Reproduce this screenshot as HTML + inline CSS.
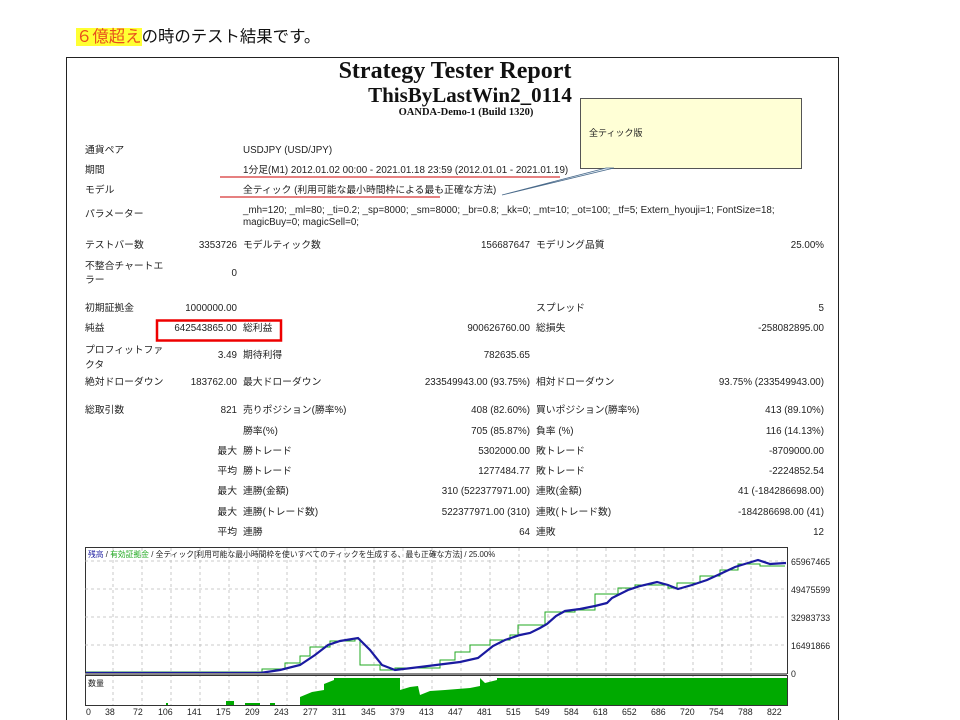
<!DOCTYPE html>
<html style="height:720px;overflow:hidden"><head><meta charset="utf-8"><style>
html,body{margin:0;width:960px;height:720px;overflow:hidden}
body{background:#fff;position:relative;font-family:"Liberation Sans","Noto Sans CJK JP",sans-serif;}
.a{position:absolute;white-space:nowrap;font-size:9.8px;color:#222;line-height:12px}
.r{text-align:right}
.t{position:absolute;left:66px;width:800px;text-align:center;font-family:"Liberation Serif",serif;font-weight:bold;color:#111;white-space:nowrap}
</style></head><body>
<div class="a" style="left:76px;top:26px;font-size:16.4px;line-height:22px;color:#111"><span style="background:#ffff33;color:#e8501c">６億超え</span>の時のテスト結果です。</div>
<div style="position:absolute;left:66px;top:57px;width:773px;height:663px;border:1px solid #222;border-bottom:none;box-sizing:border-box"></div>
<div class="t" style="top:57px;font-size:24px;line-height:28px;left:55px">Strategy Tester Report</div>
<div class="t" style="top:83px;font-size:21px;line-height:24px;left:70px">ThisByLastWin2_0114</div>
<div class="t" style="top:106px;font-size:10.5px;line-height:14px">OANDA-Demo-1 (Build 1320)</div>

<svg style="position:absolute;left:0;top:0" width="960" height="720">
<rect x="580.5" y="98.5" width="221" height="70" fill="#ffffd6" stroke="#555"/>
<polygon points="502,195 606,168 614,168" fill="#e8f2fa" stroke="#4a6a8a" stroke-width="0.8"/>
<line x1="220" y1="177" x2="560" y2="177" stroke="#c00" stroke-width="1"/>
<line x1="220" y1="197" x2="440" y2="197" stroke="#c00" stroke-width="1"/>
<rect x="157" y="320.5" width="124" height="20" fill="none" stroke="#e00" stroke-width="2.5"/>
<rect x="85.5" y="547.5" width="702" height="126" fill="#fff" stroke="#333"/>
<g stroke="#bbb" stroke-dasharray="3,3" stroke-width="0.8">
<line x1="85" y1="589" x2="787" y2="589"/><line x1="85" y1="617" x2="787" y2="617"/><line x1="85" y1="645" x2="787" y2="645"/><line x1="85" y1="561" x2="787" y2="561"/>
<line x1="113" y1="548" x2="113" y2="705"/><line x1="142" y1="548" x2="142" y2="705"/><line x1="171" y1="548" x2="171" y2="705"/><line x1="200" y1="548" x2="200" y2="705"/><line x1="229" y1="548" x2="229" y2="705"/><line x1="258" y1="548" x2="258" y2="705"/><line x1="287" y1="548" x2="287" y2="705"/><line x1="316" y1="548" x2="316" y2="705"/><line x1="345" y1="548" x2="345" y2="705"/><line x1="374" y1="548" x2="374" y2="705"/><line x1="403" y1="548" x2="403" y2="705"/><line x1="432" y1="548" x2="432" y2="705"/><line x1="461" y1="548" x2="461" y2="705"/><line x1="490" y1="548" x2="490" y2="705"/><line x1="519" y1="548" x2="519" y2="705"/><line x1="548" y1="548" x2="548" y2="705"/><line x1="577" y1="548" x2="577" y2="705"/><line x1="606" y1="548" x2="606" y2="705"/><line x1="635" y1="548" x2="635" y2="705"/><line x1="664" y1="548" x2="664" y2="705"/><line x1="693" y1="548" x2="693" y2="705"/><line x1="722" y1="548" x2="722" y2="705"/><line x1="751" y1="548" x2="751" y2="705"/>
</g>
<polyline fill="none" stroke="#22aa22" stroke-width="1" points="86,672 262,672 262,669 285,669 285,663 300,663 300,656 310,656 310,647 330,647 330,641 355,641 355,639 360,639 360,665 380,665 380,670 395,670 395,668 440,668 440,660 455,660 455,652 470,652 470,645 490,645 490,640 510,640 510,635 518,635 518,625 545,625 545,612 575,612 575,610 595,610 595,594 618,594 618,588 635,588 635,585 668,585 668,588 677,588 677,583 700,583 700,576 720,576 720,570 738,570 738,564 760,564 760,566 785,566"/>
<polyline fill="none" stroke="#1a1aa0" stroke-width="2.2" points="86,673 260,673 280,670 300,665 315,655 328,645 340,641 358,638 370,650 382,665 395,670 420,667 460,662 478,658 493,646 505,640 520,635 530,633 540,628 547,624 556,616 565,611 580,609 595,606 607,603 612,598 622,593 628,590 640,586 657,582 668,585 678,589 692,585 707,580 720,574 735,567 748,563 758,560 770,564 786,563"/>
<rect x="85.5" y="675.5" width="702" height="30" fill="none" stroke="#333"/>
<polygon fill="#00aa00" points="166,705 166,703 168,703 168,705 226,705 226,701 234,701 234,705 245,705 245,703 260,703 260,705 270,705 270,703 275,703 275,705 300,705 300,697 312,692 318,691 324,690 324,684 334,680 334,678 400,678 400,690 410,687 418,686 420,695 430,691 445,690 470,688 480,686 480,678 485,683 497,680 497,678 787,678 787,705"/>
<line x1="85" y1="674" x2="787" y2="674" stroke="#888" stroke-width="2"/>
</svg>
<div class="a" style="left:88px;top:550px;font-size:7.8px;line-height:10px"><span style="color:#1a1aa0">残高</span> / <span style="color:#22aa22">有効証拠金</span> / 全ティック[利用可能な最小時間枠を使いすべてのティックを生成する、最も正確な方法] / 25.00%</div>
<div class="a" style="left:88px;top:678px;font-size:8px">数量</div>
<div class="a" style="left:791px;top:556px;font-size:8.8px">65967465</div>
<div class="a" style="left:791px;top:584px;font-size:8.8px">49475599</div>
<div class="a" style="left:791px;top:612px;font-size:8.8px">32983733</div>
<div class="a" style="left:791px;top:640px;font-size:8.8px">16491866</div>
<div class="a" style="left:791px;top:668px;font-size:8.8px">0</div>
<div class="a" style="left:86px;top:706px;font-size:8.8px;height:12px;width:720px">
<span style="position:absolute;left:0">0</span><span style="position:absolute;left:19px">38</span><span style="position:absolute;left:47px">72</span><span style="position:absolute;left:72px">106</span><span style="position:absolute;left:101px">141</span><span style="position:absolute;left:130px">175</span><span style="position:absolute;left:159px">209</span><span style="position:absolute;left:188px">243</span><span style="position:absolute;left:217px">277</span><span style="position:absolute;left:246px">311</span><span style="position:absolute;left:275px">345</span><span style="position:absolute;left:304px">379</span><span style="position:absolute;left:333px">413</span><span style="position:absolute;left:362px">447</span><span style="position:absolute;left:391px">481</span><span style="position:absolute;left:420px">515</span><span style="position:absolute;left:449px">549</span><span style="position:absolute;left:478px">584</span><span style="position:absolute;left:507px">618</span><span style="position:absolute;left:536px">652</span><span style="position:absolute;left:565px">686</span><span style="position:absolute;left:594px">720</span><span style="position:absolute;left:623px">754</span><span style="position:absolute;left:652px">788</span><span style="position:absolute;left:681px">822</span></div>

<div class="a" style="left:589px;top:127px;font-size:9px">全ティック版</div>

<div class="a" style="left:85px;top:145px">通貨ペア</div><div class="a" style="left:243px;top:145px">USDJPY (USD/JPY)</div>
<div class="a" style="left:85px;top:165px">期間</div><div class="a" style="left:243px;top:165px">1分足(M1) 2012.01.02 00:00 - 2021.01.18 23:59 (2012.01.01 - 2021.01.19)</div>
<div class="a" style="left:85px;top:185px">モデル</div><div class="a" style="left:243px;top:185px">全ティック (利用可能な最小時間枠による最も正確な方法)</div>
<div class="a" style="left:85px;top:209px">パラメーター</div><div class="a" style="left:243px;top:205px">_mh=120; _ml=80; _ti=0.2; _sp=8000; _sm=8000; _br=0.8; _kk=0; _mt=10; _ot=100; _tf=5; Extern_hyouji=1; FontSize=18;<br>magicBuy=0; magicSell=0;</div>

<div class="a" style="left:85px;top:240px">テストバー数</div><div class="a r" style="right:723px;top:240px">3353726</div><div class="a" style="left:243px;top:240px">モデルティック数</div><div class="a r" style="right:430px;top:240px">156687647</div><div class="a" style="left:536px;top:240px">モデリング品質</div><div class="a r" style="right:136px;top:240px">25.00%</div>
<div class="a" style="left:85px;top:261px">不整合チャートエ<br><span style="line-height:16px">ラー</span></div><div class="a r" style="right:723px;top:268px">0</div>
<div class="a" style="left:85px;top:303px">初期証拠金</div><div class="a r" style="right:723px;top:303px">1000000.00</div><div class="a" style="left:536px;top:303px">スプレッド</div><div class="a r" style="right:136px;top:303px">5</div>
<div class="a" style="left:85px;top:323px">純益</div><div class="a r" style="right:723px;top:323px">642543865.00</div><div class="a" style="left:243px;top:323px">総利益</div><div class="a r" style="right:430px;top:323px">900626760.00</div><div class="a" style="left:536px;top:323px">総損失</div><div class="a r" style="right:136px;top:323px">-258082895.00</div>
<div class="a" style="left:85px;top:343px;line-height:15px">プロフィットファ<br>クタ</div><div class="a r" style="right:723px;top:350px">3.49</div><div class="a" style="left:243px;top:350px">期待利得</div><div class="a r" style="right:430px;top:350px">782635.65</div>
<div class="a" style="left:85px;top:377px">絶対ドローダウン</div><div class="a r" style="right:723px;top:377px">183762.00</div><div class="a" style="left:243px;top:377px">最大ドローダウン</div><div class="a r" style="right:430px;top:377px">233549943.00 (93.75%)</div><div class="a" style="left:536px;top:377px">相対ドローダウン</div><div class="a r" style="right:136px;top:377px">93.75% (233549943.00)</div>
<div class="a" style="left:85px;top:405px">総取引数</div><div class="a r" style="right:723px;top:405px">821</div><div class="a" style="left:243px;top:405px">売りポジション(勝率%)</div><div class="a r" style="right:430px;top:405px">408 (82.60%)</div><div class="a" style="left:536px;top:405px">買いポジション(勝率%)</div><div class="a r" style="right:136px;top:405px">413 (89.10%)</div>
<div class="a" style="left:243px;top:426px">勝率(%)</div><div class="a r" style="right:430px;top:426px">705 (85.87%)</div><div class="a" style="left:536px;top:426px">負率 (%)</div><div class="a r" style="right:136px;top:426px">116 (14.13%)</div>
<div class="a r" style="right:723px;top:446px">最大</div><div class="a" style="left:243px;top:446px">勝トレード</div><div class="a r" style="right:430px;top:446px">5302000.00</div><div class="a" style="left:536px;top:446px">敗トレード</div><div class="a r" style="right:136px;top:446px">-8709000.00</div>
<div class="a r" style="right:723px;top:466px">平均</div><div class="a" style="left:243px;top:466px">勝トレード</div><div class="a r" style="right:430px;top:466px">1277484.77</div><div class="a" style="left:536px;top:466px">敗トレード</div><div class="a r" style="right:136px;top:466px">-2224852.54</div>
<div class="a r" style="right:723px;top:486px">最大</div><div class="a" style="left:243px;top:486px">連勝(金額)</div><div class="a r" style="right:430px;top:486px">310 (522377971.00)</div><div class="a" style="left:536px;top:486px">連敗(金額)</div><div class="a r" style="right:136px;top:486px">41 (-184286698.00)</div>
<div class="a r" style="right:723px;top:507px">最大</div><div class="a" style="left:243px;top:507px">連勝(トレード数)</div><div class="a r" style="right:430px;top:507px">522377971.00 (310)</div><div class="a" style="left:536px;top:507px">連敗(トレード数)</div><div class="a r" style="right:136px;top:507px">-184286698.00 (41)</div>
<div class="a r" style="right:723px;top:527px">平均</div><div class="a" style="left:243px;top:527px">連勝</div><div class="a r" style="right:430px;top:527px">64</div><div class="a" style="left:536px;top:527px">連敗</div><div class="a r" style="right:136px;top:527px">12</div>
</body></html>
